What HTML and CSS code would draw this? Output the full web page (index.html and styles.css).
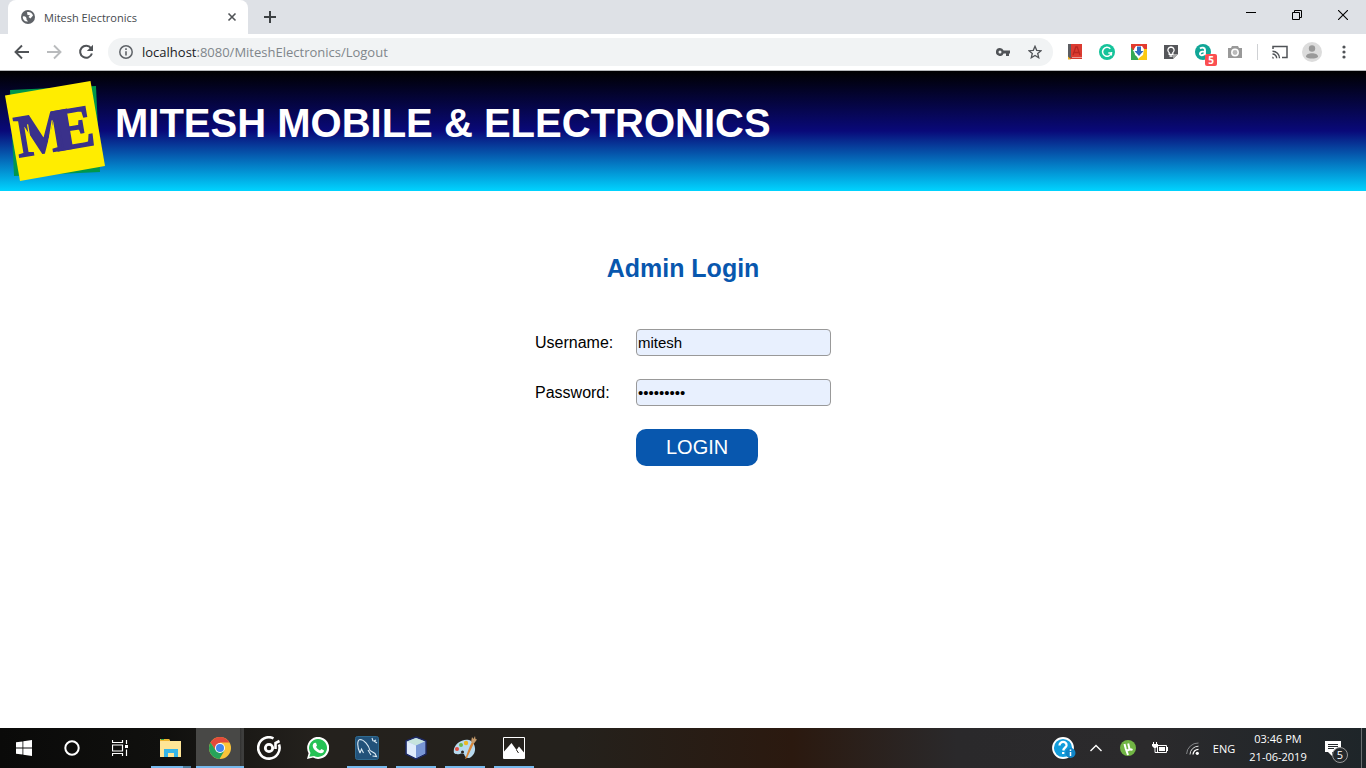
FILE: index.html
```html
<!DOCTYPE html>
<html lang="en">
<head>
<meta charset="utf-8">
<title>Mitesh Electronics</title>
<link rel="stylesheet" href="styles.css">
</head>
<body>
<div class="browser">
  <div class="tabstrip">
    <div class="tab">
      <svg class="favicon" width="14" height="14" viewBox="0 0 14 14"><circle cx="7" cy="7" r="7" fill="#5f6368"/><path d="M2 6.500C4 5.500 6 7.500 5.500 9.500L7 11.500C4 12 1.800 10 1.700 7zM6 2.200C9 1.500 11.500 3.500 12 5.500L9.500 8.500 7.500 7 9 5.300 6.500 5z" fill="#fff"/></svg>
      <span class="tab-title">Mitesh Electronics</span>
      <button class="plain" aria-label="Close tab"><svg width="10" height="10" viewBox="0 0 10 10"><path d="M1.500 1.500l7 7M8.500 1.500l-7 7" stroke="#505357" stroke-width="1.600"/></svg></button>
    </div>
    <button class="plain new-tab" aria-label="New tab"><svg width="12" height="12" viewBox="0 0 12 12"><path d="M6 0v12M0 6h12" stroke="#3c4043" stroke-width="2"/></svg></button>
    <div class="window-controls">
      <button class="plain" aria-label="Minimize"><svg width="10" height="10" viewBox="0 0 10 10"><path d="M0 2.500h10" stroke="#000"/></svg></button>
      <button class="plain" aria-label="Restore"><svg width="10" height="10" viewBox="0 0 10 10"><path d="M.5 2.500h7v7h-7zM2.500 2.500v-2h7v7h-2" fill="none" stroke="#000"/></svg></button>
      <button class="plain" aria-label="Close"><svg width="10" height="10" viewBox="0 0 10 10"><path d="M0 0l10 10M10 0L0 10" stroke="#000" stroke-width="1.100"/></svg></button>
    </div>
  </div>
  <div class="toolbar">
    <div class="cells">
      <button class="plain cell" aria-label="Back"><svg width="16" height="16" viewBox="0 0 16 16"><path d="M15 8H2M8 1.500L1.500 8 8 14.500" fill="none" stroke="#505357" stroke-width="1.900"/></svg></button>
      <button class="plain cell" aria-label="Forward"><svg width="16" height="16" viewBox="0 0 16 16"><path d="M1 8h13M8 1.500L14.500 8 8 14.500" fill="none" stroke="#b9bbbd" stroke-width="1.900"/></svg></button>
      <button class="plain cell" aria-label="Reload"><svg width="16" height="16" viewBox="0 0 16 16"><path d="M13 4.200A6 6 0 1 0 13.900 9.500" fill="none" stroke="#505357" stroke-width="2"/><path d="M15 .8V7H8.800z" fill="#505357"/></svg></button>
    </div>
    <div class="omnibox">
      <svg width="14" height="14" viewBox="0 0 14 14"><circle cx="7" cy="7" r="6.200" fill="none" stroke="#5f6368" stroke-width="1.500"/><path d="M7 6.200v4.300M7 3.300v1.600" stroke="#5f6368" stroke-width="1.600"/></svg>
      <span class="url"><span class="host">localhost</span>:8080/MiteshElectronics/Logout</span>
      <button class="plain cell" aria-label="Saved passwords"><svg width="14" height="8" viewBox="0 0 14 8"><path d="M4 0a4 4 0 1 0 3.600 5.500H10V8h3V5.500h1v-3H7.600A4 4 0 0 0 4 0z" fill="#505357"/><circle cx="4" cy="4" r="1.500" fill="#f1f3f4"/></svg></button>
      <button class="plain cell" aria-label="Bookmark"><svg width="14" height="14" viewBox="0 0 14 14"><path d="M7 1.300l1.700 4 4.300.4-3.300 2.800 1 4.200L7 10.400l-3.700 2.300 1-4.200L1 5.700l4.300-.4z" fill="none" stroke="#505357" stroke-width="1.300"/></svg></button>
    </div>
    <div class="cells">
      <button class="plain cell" aria-label="Dictionary"><svg width="14" height="16" viewBox="0 0 14 16"><path d="M0 0h4v15H0z" fill="#5c5d62"/><path d="M3 0h11v13H3z" fill="#db3b31"/><path d="M2 13.500h12V15H2z" fill="#d53a30"/><path d="M5 11l2.800-8h1.400L12 11M6 8.500h5" fill="none" stroke="#b92722" stroke-width="1.300"/><path d="M0 12.500l3 3H0z" fill="#f6b824"/></svg></button>
      <button class="plain cell" aria-label="Grammar checker"><svg width="16" height="16" viewBox="0 0 16 16"><circle cx="8" cy="8" r="8" fill="#15c39a"/><path d="M11.300 4.700A4.500 4.500 0 1 0 12.400 9H9.300" fill="none" stroke="#fff" stroke-width="1.500"/><path d="M12.500 8v3.500" stroke="#fff" stroke-width="1.200"/></svg></button>
      <button class="plain cell" aria-label="Downloader"><svg width="16" height="16" viewBox="0 0 16 16"><path d="M0 0h16v6H0z" fill="#e33b2e"/><path d="M0 3l8 13H0z" fill="#34a853"/><path d="M16 5v11H7l5-11z" fill="#fbc912"/><path d="M3 5l2-3h6l2 3-1 6-4 3-4-3z" fill="#fff"/><path d="M6 2.500h4V7h2.500L8 12 3.500 7H6z" fill="#2f6cc0"/></svg></button>
      <button class="plain cell" aria-label="Idea notes"><svg width="16" height="16" viewBox="0 0 16 16"><path d="M1 1h14v9l-5 5H1z" fill="#55565a"/><path d="M10 15l5-5h-5z" fill="#a9a9a9"/><path d="M8 3a3.200 3.200 0 0 0-1.800 5.800v1.500h3.600V8.800A3.200 3.200 0 0 0 8 3zM6.500 12h3" fill="none" stroke="#fff" stroke-width="1.300"/></svg></button>
      <button class="plain cell badge-host" aria-label="Shopping assistant, 5"><svg width="16" height="16" viewBox="0 0 16 16"><circle cx="8" cy="8" r="8" fill="#11a697"/><path d="M5 4.500c2-1.600 5-.9 5 1.200v5.500M10 7.400C4 7 4 11.200 6.500 11.200c2 0 3.500-1.500 3.500-3.300M10 10q.3 1 1.500 1" fill="none" stroke="#fff" stroke-width="1.900"/></svg><span class="badge">5</span></button>
      <button class="plain cell" aria-label="Screenshot"><svg width="16" height="14" viewBox="0 0 16 14"><path d="M1 3h3l1-2h6l1 2h3v10H1z" fill="#999"/><circle cx="8" cy="7.500" r="3.200" fill="#bbb" stroke="#fff" stroke-width="1.500"/></svg></button>
      <span class="separator"></span>
      <button class="plain cell" aria-label="Cast"><svg width="16" height="14" viewBox="0 0 16 14"><path d="M1 4V1.500h14v11H10" fill="none" stroke="#505357" stroke-width="1.500"/><path d="M.5 6.200a7 7 0 0 1 7 7M.5 9a4.200 4.200 0 0 1 4.200 4.200" fill="none" stroke="#505357" stroke-width="1.400"/><path d="M.3 11.500A2 2 0 0 1 2 13.500H.3z" fill="#505357"/></svg></button>
      <button class="plain cell" aria-label="Profile"><svg width="20" height="20" viewBox="0 0 20 20"><circle cx="10" cy="10" r="10" fill="#dcdcdc"/><circle cx="10" cy="6.500" r="3.200" fill="#999"/><path d="M4 14.500c0-4.500 12-4.500 12 0v.5c-3 2-9 2-12 0z" fill="#999"/></svg></button>
      <button class="plain cell" aria-label="Menu"><svg width="4" height="14" viewBox="0 0 4 14"><g fill="#505357"><circle cx="2" cy="2" r="1.600"/><circle cx="2" cy="7" r="1.600"/><circle cx="2" cy="12" r="1.600"/></g></svg></button>
    </div>
  </div>
</div>

<header class="site-header">
  <svg class="logo" width="100" height="102" viewBox="0 0 100 102" role="img" aria-label="ME">
    <path d="M5 10L91 6l4 86-86 4z" fill="#00974b"/>
    <path d="M0 15.500L85.500 1 100 86 15 101z" fill="#ffed00"/>
    <g transform="rotate(-9.500 50 51)" fill="#3a318b" stroke="#3a318b" stroke-width="1.500" font-family="Liberation Serif" font-weight="700" font-size="60">
      <text x="10" y="71">M</text>
      <text x="49" y="71">E</text>
      <path d="M49 40L41 64M24 40v24" stroke="#ffed00" stroke-width="1.200"/>
    </g>
  </svg>
  <h1 class="site-title">MITESH MOBILE &amp; ELECTRONICS</h1>
</header>

<main class="content">
  <h2 class="form-title">Admin Login</h2>
  <form class="login">
    <label for="username">Username:</label>
    <input class="field" id="username" type="text" value="mitesh">
    <label for="password">Password:</label>
    <input class="field" id="password" type="password" value="mitesh123">
    <button class="submit" type="button">LOGIN</button>
  </form>
</main>

<footer class="taskbar">
  <div class="system">
    <button class="plain" aria-label="Start"><svg width="16" height="16" viewBox="0 0 16 16"><path d="M0 2.300L6.500 1.400v6.200H0zM7.300 1.200L16 0v7.600H7.300zM0 8.400h6.500v6.200L0 13.700zM7.300 8.400H16V16l-8.700-1.200z" fill="#fff"/></svg></button>
    <button class="plain" aria-label="Cortana"><svg width="16" height="16" viewBox="0 0 16 16"><circle cx="8" cy="8" r="6.700" fill="none" stroke="#fff" stroke-width="2"/></svg></button>
    <button class="plain" aria-label="Task view"><svg width="16" height="16" viewBox="0 0 16 16"><path d="M.5 0v2.500h10V0M.5 16v-2.500h10V16M.5 5h10v6H.5zM14.500 0v4M14.500 9.500V16" fill="none" stroke="#fff" stroke-width="1.200"/><path d="M13 5h3v3h-3z" fill="#fff"/></svg></button>
  </div>
  <div class="apps">
    <button class="plain app open stacked" aria-label="File Explorer"><svg width="22" height="20" viewBox="0 0 22 20"><path d="M0 2V1h9l1 2h11v16H0z" fill="#ffe596"/><path d="M0 1h9l1 2H0z" fill="#eeb52e"/><path d="M1 1h3v1H1z" fill="#35a852"/><path d="M4 19v-8h14v8h-4v-4H8v4z" fill="#35b5e8"/></svg></button>
    <button class="plain app open current" aria-label="Chrome"><svg width="22" height="22" viewBox="0 0 22 22"><circle cx="11" cy="11" r="11" fill="#fbc43a"/><path d="M1.500 5.500A11 11 0 0 1 20.500 5.500H11L6.500 13z" fill="#e24a3b"/><path d="M1.500 5.500A11 11 0 0 0 10.500 22l5-8.500-9-.5z" fill="#27a35a"/><circle cx="11" cy="11" r="5" fill="#fff"/><circle cx="11" cy="11" r="4" fill="#4286ee"/></svg></button>
    <button class="plain app" aria-label="Groove Music"><svg width="24" height="24" viewBox="0 0 24 24"><path d="M16.500 2.300A10.700 10.700 0 1 0 22 8.500" fill="none" stroke="#fff" stroke-width="2.600"/><circle cx="12" cy="12" r="3.700" fill="none" stroke="#fff" stroke-width="2.800"/><path d="M18.500 13V7L22.500 5" fill="none" stroke="#fff" stroke-width="2.600"/></svg></button>
    <button class="plain app" aria-label="WhatsApp"><svg width="22" height="22" viewBox="0 0 22 22"><path d="M0 22l1.600-5.700A11 11 0 1 1 6 20.600z" fill="#fff"/><path d="M2.300 19.700l1.200-3.800A9 9 0 1 1 7 19z" fill="#25c255"/><path d="M7 6l2-.2L10 8.500 9 10q1.500 2.500 4 3.500l1.300-1.500 2.600 1.200c.4 3-3 3.600-5 2.600-3-1.200-6-4-6.200-7Q5.800 7 7 6z" fill="#fff"/></svg></button>
    <button class="plain app open" aria-label="MySQL Workbench"><svg width="24" height="24" viewBox="0 0 24 24"><rect x=".5" y=".5" width="23" height="23" rx="2" fill="#22527a" stroke="#2f6a90"/><path d="M5 17C2 11 2 4 5 3.500c4 0 9 6 10 11l5 3 1.500 3-4-.5M5 17l1.500-4 2 4M13 14l3 5M17 2l1 3M21 4l-2 1 3 2" fill="none" stroke="#dbeaf3" stroke-width="1.100"/></svg></button>
    <button class="plain app open" aria-label="NetBeans"><svg width="22" height="24" viewBox="0 0 22 24"><path d="M11 1l10 4v13l-10 5L1 18V5z" fill="#a4bfea" stroke="#1d2862" stroke-width="1.500"/><path d="M11 2l9 3.500-9 4-9-4z" fill="#c7e3dd"/><path d="M2 5.500l9 4V22l-9-4.500z" fill="#e0ebfb"/><path d="M20 5.500l-9 4V22l9-4.500z" fill="#7896d5"/></svg></button>
    <button class="plain app open" aria-label="Paint"><svg width="24" height="24" viewBox="0 0 24 24"><path d="M1 17C-1 9 9 2 16 4c6 2 8 10 4 15-5 6-8 2-9-1-3-2-6 2-10-1z" fill="#b7d9ee"/><circle cx="9.500" cy="16" r="1.500" fill="#27221d"/><circle cx="4" cy="13" r="2" fill="#e24d40"/><circle cx="8" cy="9" r="2" fill="#6dba4b"/><circle cx="13" cy="7" r="2.200" fill="#ecb824"/><path d="M12 23c2-5 4-12 7-17l2 1-7 15z" fill="#d88638"/><path d="M18 6l1-5 1.500 2L22 0l.5 3 1.500.5-3 4z" fill="#c69b6b"/></svg></button>
    <button class="plain app open" aria-label="Photos"><svg width="22" height="22" viewBox="0 0 22 22"><path d="M.5.5h21v21H.5z" fill="none" stroke="#fff"/><path d="M1 14.500L8.500 6l5 7L16 9.500l5 6V21H1z" fill="#fff"/><path d="M13.500 13l2 3" stroke="#27221d"/></svg></button>
  </div>
  <div class="tray">
    <button class="plain cell" aria-label="Help"><svg width="24" height="22" viewBox="0 0 24 22"><circle cx="11" cy="11" r="10" fill="#129cdb" stroke="#fff" stroke-width="1.800"/><path d="M7.500 8.500c0-5 7.500-4.500 7 0-.3 2-3 2.300-3.300 5M11.200 15v2" fill="none" stroke="#fff" stroke-width="2.300"/><circle cx="18.500" cy="16" r="5" fill="#1085c7"/><path d="M18.500 15v4M18.500 12.500v1.500" stroke="#fff" stroke-width="1.500"/></svg></button>
    <button class="plain cell" aria-label="Show hidden icons"><svg width="12" height="8" viewBox="0 0 12 8"><path d="M.5 7L6 1.500 11.500 7" fill="none" stroke="#fff" stroke-width="1.400"/></svg></button>
    <button class="plain cell" aria-label="Torrents"><svg width="16" height="16" viewBox="0 0 16 16"><circle cx="8" cy="8" r="8" fill="#71b544"/><path d="M4.500 4l1.300 5c.6 2 4 1.500 3.500-.8L8.200 3.500M9.200 8c.4 1.800 2 2 3.300 1.200M6 9.500L8 15" fill="none" stroke="#fff" stroke-width="2"/></svg></button>
    <button class="plain cell" aria-label="Battery"><svg width="16" height="12" viewBox="0 0 16 12"><path d="M1.500 0v2M4.500 0v2M3 5v5.500h3" fill="none" stroke="#fff"/><path d="M0 2h6v2L4 6H2L0 4z" fill="#fff"/><path d="M5.500 3.500h9v7h-9z" fill="none" stroke="#fff"/><path d="M7 5h6v4H7zM15 5h1v4h-1z" fill="#fff"/></svg></button>
    <button class="plain cell" aria-label="Wi-Fi"><svg width="13" height="13" viewBox="0 0 13 13"><g fill="none"><path d="M.6 12A11.500 11.500 0 0 1 12.500 1" stroke="#858789"/><path d="M4 12.500A8.500 8.500 0 0 1 12.500 4.200" stroke="#ddd"/><path d="M7 12.500a5.500 5.500 0 0 1 5.500-5.200" stroke="#fff" stroke-width="1.300"/></g><circle cx="11.300" cy="11.300" r="1.600" fill="#fff"/></svg></button>
    <span class="lang">ENG</span>
    <div class="clock"><span>03:46 PM</span><span>21-06-2019</span></div>
    <button class="plain notices" aria-label="Notifications, 5"><svg width="16" height="15" viewBox="0 0 16 15"><path d="M0 0h16v11H7v4l-4-4H0z" fill="#fff"/><path d="M3 3.500h10M3 5.500h10M3 7.500h6" stroke="#252a2e"/></svg><span class="count">5</span></button>
    <span class="desktop-edge"></span>
  </div>
</footer>
</body>
</html>
```
FILE: styles.css
```css
* { box-sizing: border-box; }

body {
  margin: 0;
  min-height: 100vh;
  display: flex;
  flex-direction: column;
  background: #fff;
  color: #000;
  font-family: "Liberation Sans", Arial, sans-serif;
}

svg { display: block; flex: none; }

.plain {
  display: flex;
  align-items: center;
  justify-content: center;
  margin: 0;
  padding: 0;
  border: 0;
  background: none;
  color: inherit;
  font: inherit;
}

.cell { width: 32px; height: 28px; flex: none; }
.cells { display: flex; align-items: center; }

/* Browser window */
.browser {
  font-family: "Open Sans", "Noto Sans", sans-serif;
  border-bottom: 1px solid #b6b8ba;
}

.tabstrip {
  display: flex;
  align-items: center;
  height: 34px;
  padding-left: 8px;
  background: #dee1e6;
}

.tab {
  display: flex;
  align-items: center;
  gap: 9px;
  width: 240px;
  height: 34px;
  padding: 0 11px 0 13px;
  border-radius: 8px 8px 0 0;
  background: #fff;
}

.tab-title { flex: 1; font-size: 11px; color: #45494d; }
.new-tab { margin-left: 16px; }
.window-controls { display: flex; margin-left: auto; padding-bottom: 5px; }
.window-controls .plain { width: 46px; }

.toolbar {
  display: flex;
  align-items: center;
  gap: 6px;
  height: 36px;
  padding: 0 6px;
}

.omnibox {
  display: flex;
  flex: 1;
  align-items: center;
  height: 28px;
  padding: 0 2px 0 11px;
  border-radius: 14px;
  background: #f1f3f4;
}

.url { flex: 1; margin-left: 9px; font-size: 13px; color: #80868b; }
.host { color: #202124; }
.separator { width: 1px; height: 16px; margin: 0 6px; background: #cfd1d4; }
.badge-host { position: relative; }

.badge {
  position: absolute;
  right: 2px;
  bottom: 0;
  width: 12px;
  height: 12px;
  border-radius: 2px;
  background: #fb4f51;
  color: #fff;
  font-size: 10px;
  font-weight: 700;
  line-height: 12px;
  text-align: center;
}

/* Site header */
.site-header {
  display: flex;
  align-items: center;
  gap: 10px;
  height: 120px;
  padding: 0 5px;
  background: linear-gradient(180deg, #000 0%, #090979 50%, #00d4ff 100%);
}

.site-title {
  margin: 0;
  padding-bottom: 16px;
  color: #fff;
  font-size: 40px;
  line-height: 46px;
}

/* Login form */
.content {
  display: flex;
  flex: 1;
  flex-direction: column;
  align-items: center;
  padding-top: 62px;
}

.form-title {
  margin: 0;
  color: #0857ae;
  font-size: 25px;
  line-height: 30px;
}

.login {
  display: grid;
  grid-template-columns: 101px 195px;
  align-items: center;
  row-gap: 23px;
  margin-top: 46px;
  font-size: 16px;
}

.field {
  width: 100%;
  height: 27px;
  padding: 0 1px;
  border: 1px solid #999;
  border-radius: 4px;
  background: #e8f0fe;
  color: #000;
  font: 15px "Liberation Sans", Arial, sans-serif;
}

.submit {
  grid-column: 2;
  justify-self: start;
  padding: 7px 30px;
  border: 0;
  border-radius: 10px;
  background: #0857ae;
  color: #fff;
  font: 20px/23px "Liberation Sans", Arial, sans-serif;
}

/* Desktop taskbar */
.taskbar {
  display: flex;
  height: 40px;
  background: linear-gradient(90deg, #0a0a09 0%, #10100e 12%, #24211d 23%, #24211c 42%, #2b190f 58%, #2a292b 70%, #2b2a2c 84%, #1e2529 100%);
  color: #fff;
  font-family: "Open Sans", "Noto Sans", sans-serif;
  font-size: 11px;
}

.system, .apps, .tray { display: flex; }
.system .plain { width: 48px; }
.apps { gap: 9px; margin-left: 7px; }

.app {
  width: 40px;
  border-top: 2px solid transparent;
  border-bottom: 2px solid transparent;
}

.open { border-bottom-color: #76b9ed; }
.stacked { border-image: linear-gradient(90deg, #76b9ed 31px, #4d7f9f 31px) 2; border-top-width: 0; padding-top: 2px; }
.current { width: 48px; margin: 0 -4px; background: linear-gradient(90deg, #484846 44px, #30302f 44px, #3e3e3d 46px); }
.tray { align-items: center; margin-left: auto; }
.lang { width: 32px; text-align: center; }

.clock {
  display: flex;
  flex-direction: column;
  width: 76px;
  line-height: 18px;
  text-align: center;
}

.notices { position: relative; width: 40px; height: 40px; padding-right: 6px; }

.count {
  position: absolute;
  left: 16px;
  top: 19px;
  width: 16px;
  height: 16px;
  border: 1px solid #999;
  border-radius: 50%;
  background: #24292d;
  line-height: 14px;
  text-align: center;
}

.desktop-edge { width: 1px; height: 40px; margin: 0 4px 0 5px; background: #6a6e70; }
```
